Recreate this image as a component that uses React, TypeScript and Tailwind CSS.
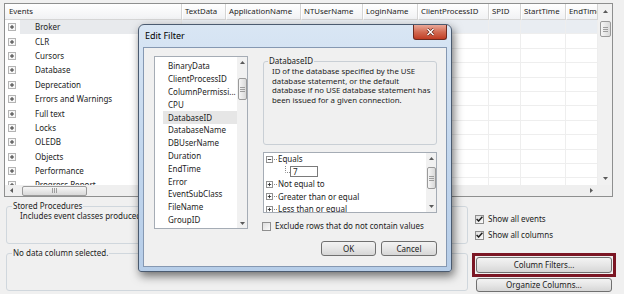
import React from "react";

const events = [
  "Broker",
  "CLR",
  "Cursors",
  "Database",
  "Deprecation",
  "Errors and Warnings",
  "Full text",
  "Locks",
  "OLEDB",
  "Objects",
  "Performance",
  "Progress Report",
  "Scans",
];

const columns = [
  { name: "TextData", cls: "w-[44px]" },
  { name: "ApplicationName", cls: "w-[75px]" },
  { name: "NTUserName", cls: "w-[62px]" },
  { name: "LoginName", cls: "w-[55px]" },
  { name: "ClientProcessID", cls: "w-[71px]" },
  { name: "SPID", cls: "w-[32px]" },
  { name: "StartTime", cls: "w-[45px]" },
  { name: "EndTime", cls: "flex-1" },
];

const fields = [
  "BinaryData",
  "ClientProcessID",
  "ColumnPermissi...",
  "CPU",
  "DatabaseID",
  "DatabaseName",
  "DBUserName",
  "Duration",
  "EndTime",
  "Error",
  "EventSubClass",
  "FileName",
  "GroupID",
];

function Tri({ dir }: { dir: "up" | "down" | "left" | "right" }) {
  if (dir === "up")
    return (
      <svg width="5" height="3" viewBox="0 0 5 3">
        <path d="M0 3 L2.5 0 L5 3Z" fill="#5a5a5a" />
      </svg>
    );
  if (dir === "down")
    return (
      <svg width="5" height="3" viewBox="0 0 5 3">
        <path d="M0 0 L2.5 3 L5 0Z" fill="#5a5a5a" />
      </svg>
    );
  if (dir === "left")
    return (
      <svg width="3" height="5" viewBox="0 0 3 5">
        <path d="M3 0 L0 2.5 L3 5Z" fill="#5a5a5a" />
      </svg>
    );
  return (
    <svg width="3" height="5" viewBox="0 0 3 5">
      <path d="M0 0 L3 2.5 L0 5Z" fill="#5a5a5a" />
    </svg>
  );
}

function VBar({ arrowCls, thumbCls, className }: { arrowCls: string; thumbCls: string; className: string }) {
  return (
    <div className={`flex flex-col bg-[#f1f1f1] ${className}`}>
      <div className={`flex items-center justify-center ${arrowCls}`}>
        <Tri dir="up" />
      </div>
      <div className="flex-1">
        <div
          className={`mx-auto flex items-center justify-center rounded-[2px] border border-[#9a9a9a] bg-gradient-to-r from-[#f6f6f6] to-[#d9d9d9] ${thumbCls}`}
        >
          <svg width="5" height="5" viewBox="0 0 5 5">
            <path d="M0 0.5h5M0 2.5h5M0 4.5h5" stroke="#8a8a8a" strokeWidth="0.8" />
          </svg>
        </div>
      </div>
      <div className={`flex items-center justify-center ${arrowCls}`}>
        <Tri dir="down" />
      </div>
    </div>
  );
}

function PlusBox() {
  return (
    <svg width="8" height="8" viewBox="0 0 8 8">
      <rect x="0.5" y="0.5" width="7" height="7" fill="#f7f7f7" stroke="#b4b4b4" />
      <path d="M2 4h4M4 2v4" stroke="#3a3a3a" strokeWidth="1" />
    </svg>
  );
}

function TreeBox({ open }: { open?: boolean }) {
  return (
    <svg width="7" height="7" viewBox="0 0 7 7" className="shrink-0">
      <rect x="0.5" y="0.5" width="6" height="6" fill="white" stroke="#919191" />
      <path d="M1.8 3.5h3.4" stroke="#333" strokeWidth="0.9" />
      {!open && <path d="M3.5 1.8v3.4" stroke="#333" strokeWidth="0.9" />}
    </svg>
  );
}

function Check({ checked }: { checked?: boolean }) {
  return (
    <span className="flex h-[9px] w-[9px] shrink-0 items-center justify-center border border-[#8f8f8f] bg-gradient-to-br from-[#dedede] to-[#fbfbfb]">
      {checked && (
        <svg width="7" height="6" viewBox="0 0 7 6">
          <path d="M0.6 3 L2.6 5 L6.4 0.8" stroke="#1f1f1f" strokeWidth="1.5" fill="none" />
        </svg>
      )}
    </span>
  );
}

function Button({ label, className }: { label: string; className: string }) {
  return (
    <div
      className={`flex items-center justify-center rounded-[3px] border border-[#707070] bg-gradient-to-b from-[#f3f3f3] via-[#e6e6e6] to-[#d6d6d6] text-[8px] text-[#1a1a1a] ${className}`}
    >
      {label}
    </div>
  );
}

function Grid() {
  return (
    <div className="flex h-[194px] w-[609px] border border-[#8e8f8f] bg-white">
      <div className="flex min-w-0 flex-1 flex-col">
        <div className="flex h-[16px] shrink-0 text-[7.8px]">
          <div className="flex w-[177px] items-center border-b border-r border-[#d5d5d5] bg-gradient-to-b from-white to-[#f1f2f4] pl-[4px]">
            Events
          </div>
          {columns.map((c) => (
            <div
              key={c.name}
              className={`flex items-center overflow-hidden whitespace-nowrap border-b border-r border-l border-l-white border-[#d5d5d5] bg-gradient-to-b from-white to-[#f1f2f4] pl-[2px] ${c.cls}`}
            >
              {c.name}
            </div>
          ))}
        </div>
        <div className="flex-1 overflow-hidden">
          {events.map((e, i) => (
            <div key={e} className="flex h-[14.4px]">
              <div className="flex w-[177px] border-r border-[#e6e6e6]">
                <div className="flex w-[15px] items-center pl-[3px]">
                  <PlusBox />
                </div>
                <div className={`flex flex-1 items-center pl-[15px] ${i === 0 ? "bg-[#e8eaed]" : ""}`}>{e}</div>
              </div>
              {columns.map((c) => (
                <div
                  key={c.name}
                  className={`border-b border-r border-[#eeeeee] ${c.cls} ${i === 0 ? "bg-[#e9edf2]" : ""}`}
                />
              ))}
            </div>
          ))}
        </div>
        <div className="flex h-[11px] shrink-0 items-center bg-[#efefef]">
          <div className="flex w-[12px] items-center justify-center">
            <Tri dir="left" />
          </div>
          <div className="ml-[5px] flex h-[10px] w-[65px] items-center justify-center rounded-[2px] border border-[#9a9a9a] bg-gradient-to-b from-[#f6f6f6] to-[#d9d9d9]">
            <svg width="5" height="5" viewBox="0 0 5 5">
              <path d="M0.5 0v5M2.5 0v5M4.5 0v5" stroke="#8a8a8a" strokeWidth="0.8" />
            </svg>
          </div>
          <div className="flex-1" />
          <div className="flex w-[14px] items-center justify-center">
            <Tri dir="right" />
          </div>
        </div>
      </div>
      <div className="flex w-[14px] flex-col">
        <VBar className="flex-1" arrowCls="h-[14px]" thumbCls="mt-[3px] h-[16px] w-[11px]" />
        <div className="h-[11px] bg-[#efefef]" />
      </div>
    </div>
  );
}

function GroupBox({ label, className, children }: { label: string; className: string; children?: React.ReactNode }) {
  return (
    <div className={`relative rounded-[3px] border border-[#d0d7dd] ${className}`}>
      <span className="absolute -top-[6px] left-[5px] bg-[#f0f0f0] px-[1px] leading-[10px]">{label}</span>
      {children}
    </div>
  );
}

function Lower() {
  return (
    <div className="flex">
      <div className="ml-[2px] flex w-[462px] flex-col">
        <GroupBox label="Stored Procedures" className="mt-[9px] h-[38px]">
          <div className="whitespace-nowrap pl-[13px] pt-[4px] leading-[10px]">
            Includes event classes produced by the execution of stored procedures.
          </div>
        </GroupBox>
        <GroupBox label="No data column selected." className="mt-[9px] h-[38px]" />
      </div>
      <div className="flex flex-1 flex-col">
        <div className="ml-[7px] mt-[16px] flex h-[12px] items-center gap-[4px]">
          <Check checked />
          <span>Show all events</span>
        </div>
        <div className="ml-[7px] mt-[4px] flex h-[12px] items-center gap-[4px]">
          <Check checked />
          <span>Show all columns</span>
        </div>
        <div className="ml-[4px] mt-[12px] w-[144px] border-[3px] border-[#7b1624] p-[1px]">
          <Button label="Column Filters..." className="h-[16px]" />
        </div>
        <Button label="Organize Columns..." className="ml-[8px] mt-[1px] h-[14px] w-[136px]" />
      </div>
    </div>
  );
}

function EditFilter() {
  return (
    <div className="absolute left-[138px] top-[24px] flex h-[248px] w-[314px] flex-col rounded-t-[6px] rounded-b-[3px] border border-[#4b5b70] bg-gradient-to-b from-[#d9e6f4] via-[#c3d7ee] to-[#b6cde8] shadow-[2px_4px_10px_rgba(0,0,0,0.55)]">
      <div className="relative flex h-[22px] items-center pl-[6px] text-[9px] text-black">
        Edit Filter
        <div className="absolute right-[4px] top-0 flex h-[15px] w-[34px] items-center justify-center rounded-b-[3px] border border-t-0 border-[#6b2a20] bg-gradient-to-b from-[#e9a899] via-[#d26a52] to-[#c03b22]">
          <svg width="9" height="8" viewBox="0 0 9 8">
            <path d="M1.5 1 L7.5 7 M7.5 1 L1.5 7" stroke="#5a1a10" strokeWidth="2.6" />
            <path d="M1.5 1 L7.5 7 M7.5 1 L1.5 7" stroke="white" strokeWidth="1.5" />
          </svg>
        </div>
      </div>
      <div className="mx-[4px] mb-[4px] flex flex-1 border border-[#8598b2] bg-[#f0f0f0] pl-[10px] pt-[8px]">
        <div className="flex h-[173px] w-[94px] border border-[#a5acb5] bg-white">
          <div className="flex-1 overflow-hidden pl-[8px] pt-[3px]">
            {fields.map((f) => (
              <div
                key={f}
                className={`flex h-[12.8px] items-center whitespace-nowrap pl-[5px] ${f === "DatabaseID" ? "bg-[#e6e6e6]" : ""}`}
              >
                {f}
              </div>
            ))}
          </div>
          <VBar className="w-[10px]" arrowCls="h-[10px]" thumbCls="mt-[11px] h-[22px] w-[9px]" />
        </div>
        <div className="ml-[15px] flex w-[174px] flex-col">
          <fieldset className="h-[89px] rounded-[3px] border border-[#c9cfd5] pl-[8px]">
            <legend className="-ml-[4px] px-[1px] leading-[10px]">DatabaseID</legend>
            <div className="mt-[1px] whitespace-nowrap text-[7.8px] leading-[9.5px]">
              ID of the database specified by the USE
              <br />
              database statement, or the default
              <br />
              database if no USE database statement has
              <br />
              been issued for a given connection.
            </div>
          </fieldset>
          <div className="mt-[7px] flex h-[61px] border border-[#a5acb5] bg-white">
            <div className="flex-1 overflow-hidden pl-[2px]">
              <div className="flex h-[12.5px] items-center">
                <TreeBox open />
                <span className="ml-[1px] w-[3px] border-t border-dotted border-[#8a8a8a]" />
                <span className="ml-[1px]">Equals</span>
              </div>
              <div className="flex h-[12.5px] items-center pl-[19px]">
                <svg width="5" height="12" viewBox="0 0 5 12" className="shrink-0">
                  <path d="M0.5 0v6.5h4.5" stroke="#8a8a8a" strokeWidth="1" fill="none" strokeDasharray="1 1" />
                </svg>
                <div className="flex h-[11px] w-[28px] items-center border border-[#7a7a7a] pl-[2px]">7</div>
              </div>
              {["Not equal to", "Greater than or equal", "Less than or equal"].map((t) => (
                <div key={t} className="flex h-[12.5px] items-center whitespace-nowrap">
                  <TreeBox />
                  <span className="ml-[1px] w-[3px] border-t border-dotted border-[#8a8a8a]" />
                  <span className="ml-[1px]">{t}</span>
                </div>
              ))}
            </div>
            <VBar className="w-[10px]" arrowCls="h-[11px]" thumbCls="mt-[3px] h-[22px] w-[9px]" />
          </div>
          <div className="ml-[-1px] mt-[8px] flex h-[10px] items-center gap-[4px]">
            <Check />
            <span>Exclude rows that do not contain values</span>
          </div>
          <div className="mt-[10px] flex justify-end gap-[5px]">
            <Button label="OK" className="h-[15px] w-[55px]" />
            <Button label="Cancel" className="h-[15px] w-[56px]" />
          </div>
        </div>
      </div>
    </div>
  );
}

export default function App() {
  return (
    <div className="relative h-[294px] w-[624px] overflow-hidden bg-[#f0f0f0] font-['Noto_Sans','Open_Sans',sans-serif] text-[8px] text-[#1c1c1c]">
      <div className="pl-[4px] pt-[3px]">
        <Grid />
        <Lower />
      </div>
      <EditFilter />
    </div>
  );
}
